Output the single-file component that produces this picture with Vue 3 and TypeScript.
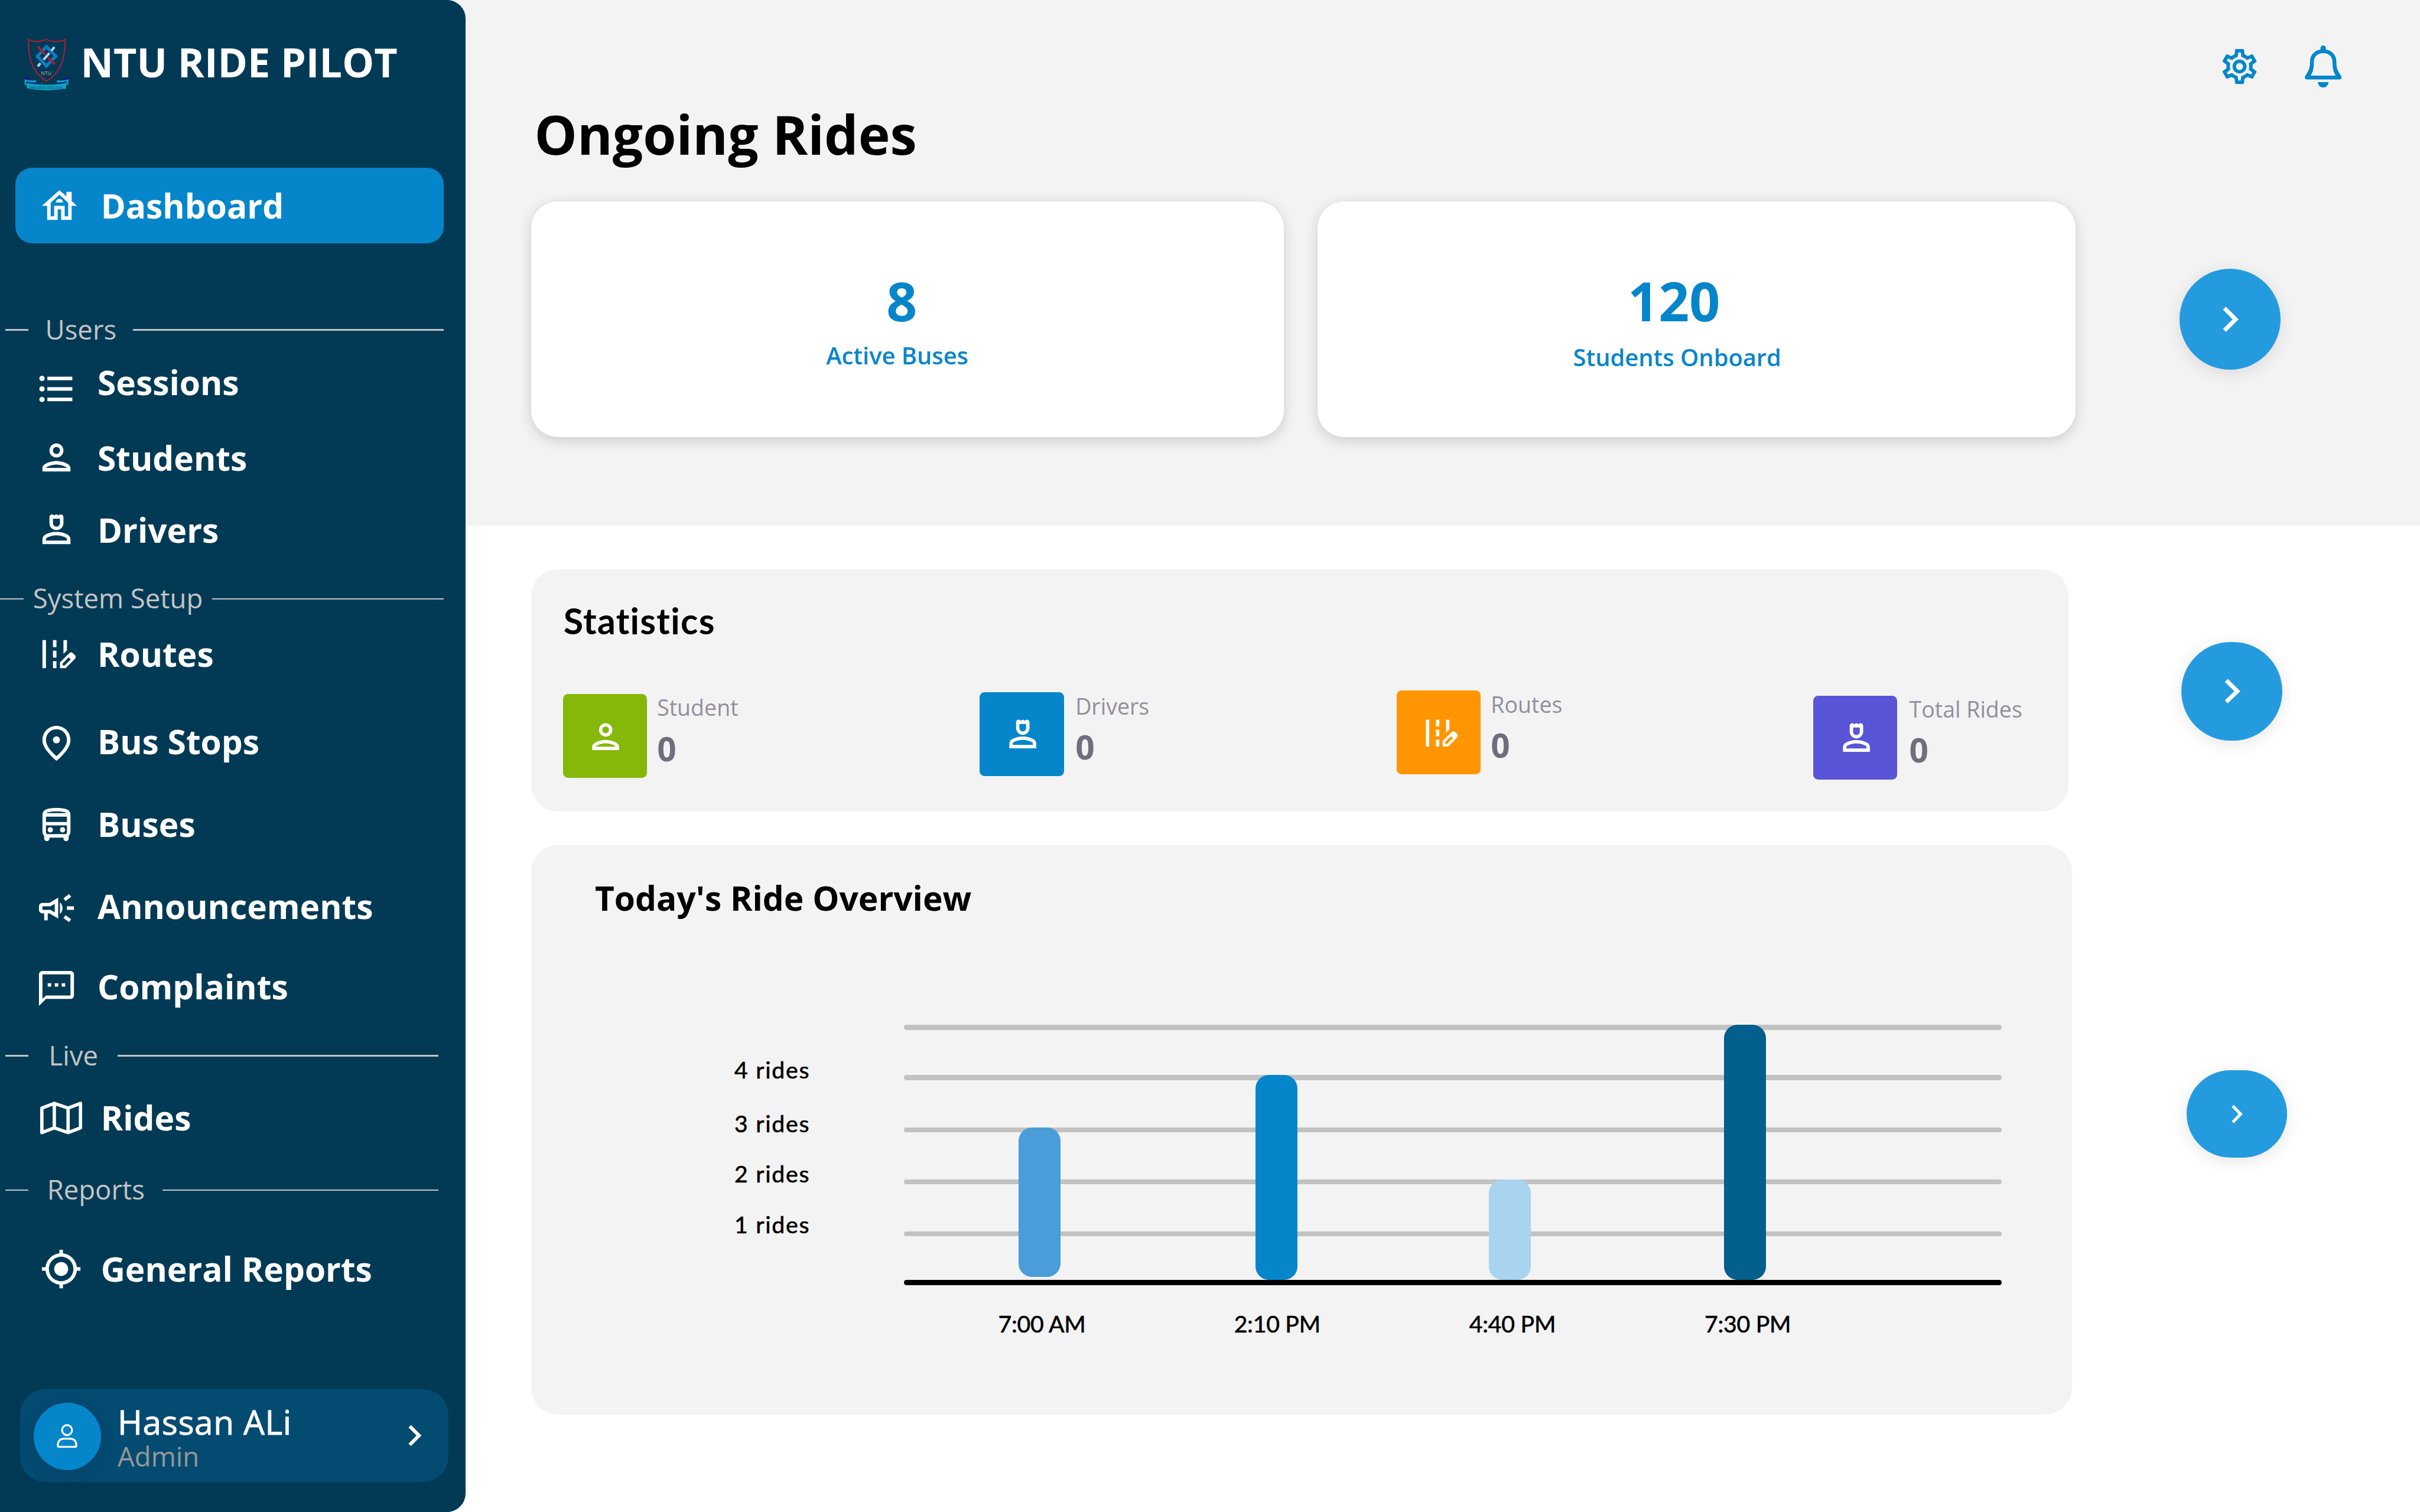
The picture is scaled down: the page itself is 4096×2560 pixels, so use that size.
<script setup lang="ts">
type IconName =
  | 'home' | 'list' | 'person' | 'driver' | 'road' | 'pin' | 'bus' | 'campaign'
  | 'message' | 'target' | 'chevron' | 'gear'

interface NavItem { key: string; label: string; icon: IconName | 'map' }
interface NavSection { key: string; title: string; items: NavItem[] }
interface Stat { key: string; label: string; value: number; icon: IconName }
interface RideBar { key: string; time: string; height: number }

const icons: Record<IconName, string> = {
  home: 'M19 9.3V4h-3v2.6L12 3 2 12h3v8h6v-6h2v6h6v-8h3l-3-2.7zM17 18h-2v-6H9v6H7v-7.81l5-4.5 5 4.5V18zM10 10h4c0-1.1-.9-2-2-2s-2 .9-2 2z',
  list: 'M4 10.5c-.83 0-1.5.67-1.5 1.5s.67 1.5 1.5 1.5 1.5-.67 1.5-1.5-.67-1.5-1.5-1.5zm0-6c-.83 0-1.5.67-1.5 1.5S3.17 7.5 4 7.5 5.5 6.83 5.5 6 4.83 4.5 4 4.5zm0 12c-.83 0-1.5.68-1.5 1.5s.68 1.5 1.5 1.5 1.5-.68 1.5-1.5-.67-1.5-1.5-1.5zM7 19h14v-2H7v2zm0-6h14v-2H7v2zm0-8v2h14V5H7z',
  person: 'M12 6c1.1 0 2 .9 2 2s-.9 2-2 2-2-.9-2-2 .9-2 2-2m0 10c2.7 0 5.8 1.29 6 2H6c.23-.72 3.31-2 6-2m0-12C9.79 4 8 5.79 8 8s1.79 4 4 4 4-1.79 4-4-1.79-4-4-4zm0 10c-2.67 0-8 1.34-8 4v2h16v-2c0-2.66-5.33-4-8-4z',
  driver: 'M18.39 14.56C16.71 13.7 14.53 13 12 13s-4.71.7-6.39 1.56C4.61 15.07 4 16.1 4 17.22V20h16v-2.78c0-1.12-.61-2.15-1.61-2.66zM18 18H6v-.78c0-.38.2-.72.52-.88C7.71 15.73 9.63 15 12 15c2.37 0 4.29.73 5.48 1.34.32.16.52.5.52.88V18zM12 12c2.21 0 4-1.79 4-4V4.5c0-.83-.67-1.5-1.5-1.5-.52 0-.98.27-1.25.67-.27-.4-.73-.67-1.25-.67s-.98.27-1.25.67c-.27-.4-.73-.67-1.25-.67C8.67 3 8 3.67 8 4.5V8c0 2.21 1.79 4 4 4zM10 5.5h4V8c0 1.1-.9 2-2 2s-2-.9-2-2V5.5z',
  road: 'M18 4h-2v7.9l2-2V4zM4 4h2v16H4V4zM10 4h2v4h-2V4zM10 10h2v4h-2v-4zM10 16h2v4h-2v-4zM22.56 12.59l-1.15-1.15c-.59-.59-1.54-.59-2.12 0L14 16.73V20h3.27l5.29-5.29c.59-.59.59-1.54 0-2.12zM16.65 18.5H15.5v-1.15l3.5-3.5 1.15 1.15-3.5 3.5z',
  pin: 'M12 2C7.8 2 4 5.22 4 10.2c0 3.32 2.67 7.25 8 11.8 5.33-4.55 8-8.48 8-11.8C20 5.22 16.2 2 12 2zm0 17.34c-3.9-3.35-6-6.57-6-9.14C6 6.57 8.65 4 12 4s6 2.57 6 6.2c0 2.57-2.1 5.79-6 9.14zM12 8c-1.1 0-2 .9-2 2s.9 2 2 2 2-.9 2-2-.9-2-2-2z',
  bus: 'M12 2C8 2 4 2.5 4 6v9.5c0 .95.38 1.81 1 2.44v1.56c0 .83.67 1.5 1.5 1.5S8 20.33 8 19.5V19h8v.5c0 .82.67 1.5 1.5 1.5.82 0 1.5-.67 1.5-1.5v-1.56c.62-.63 1-1.49 1-2.44V6c0-3.5-3.58-4-8-4zm5.66 2.99H6.34C6.89 4.46 8.31 4 12 4s5.11.46 5.66.99zM18 6.99V10H6V6.99h12zm-.34 9.74-.29.27H6.63l-.29-.27C6.21 16.62 6 16.17 6 15.5V12h12v3.5c0 .67-.21 1.12-.34 1.23zM8.5 13C7.67 13 7 13.67 7 14.5S7.67 16 8.5 16s1.5-.67 1.5-1.5S9.33 13 8.5 13zM15.5 13c-.83 0-1.5.67-1.5 1.5s.67 1.5 1.5 1.5 1.5-.67 1.5-1.5-.67-1.5-1.5-1.5z',
  campaign: 'M18 11v2h4v-2h-4zM16 17.61c.96.71 2.21 1.65 3.2 2.39.4-.53.8-1.07 1.2-1.6-.99-.74-2.24-1.68-3.2-2.4-.4.54-.8 1.08-1.2 1.61zM20.4 5.6C20 5.07 19.6 4.53 19.2 4c-.99.74-2.24 1.68-3.2 2.4.4.53.8 1.07 1.2 1.6.96-.72 2.21-1.65 3.2-2.4zM4 9c-1.1 0-2 .9-2 2v2c0 1.1.9 2 2 2h1v4h2v-4h1l5 3V6L8 9H4zm5.03 1.71L11 9.53v4.94l-1.97-1.18-.48-.29H4v-2h4.55l.48-.29zM15.5 12c0-1.33-.58-2.53-1.5-3.35v6.69c.92-.81 1.5-2.01 1.5-3.34z',
  message: 'M20 2H4c-1.1 0-2 .9-2 2v18l4-4h14c1.1 0 2-.9 2-2V4c0-1.1-.9-2-2-2zm0 14H6l-2 2V4h16v12zM7 9h2v2H7V9zM11 9h2v2h-2V9zM15 9h2v2h-2V9z',
  target: 'M12 8c-2.21 0-4 1.79-4 4s1.79 4 4 4 4-1.79 4-4-1.79-4-4-4zm8.94 3c-.46-4.17-3.77-7.48-7.94-7.94V1h-2v2.06C6.83 3.52 3.52 6.83 3.06 11H1v2h2.06c.46 4.17 3.77 7.48 7.94 7.94V23h2v-2.06c4.17-.46 7.48-3.77 7.94-7.94H23v-2h-2.06zM12 19c-3.87 0-7-3.13-7-7s3.13-7 7-7 7 3.13 7 7-3.13 7-7 7z',
  chevron: 'M10 6 8.59 7.41 13.17 12l-4.58 4.59L10 18l6-6z',
  gear: 'M19.43 12.98c.04-.32.07-.64.07-.98 0-.34-.03-.66-.07-.98l2.11-1.65c.19-.15.24-.42.12-.64l-2-3.46c-.09-.16-.26-.25-.44-.25-.06 0-.12.01-.17.03l-2.49 1c-.52-.4-1.08-.73-1.69-.98l-.38-2.65C14.46 2.18 14.25 2 14 2h-4c-.25 0-.46.18-.49.42l-.38 2.65c-.61.25-1.17.59-1.69.98l-2.49-1c-.06-.02-.12-.03-.18-.03-.17 0-.34.09-.43.25l-2 3.46c-.13.22-.07.49.12.64l2.11 1.65c-.04.32-.07.65-.07.98 0 .33.03.66.07.98l-2.11 1.65c-.19.15-.24.42-.12.64l2 3.46c.09.16.26.25.44.25.06 0 .12-.01.17-.03l2.49-1c.52.4 1.08.73 1.69.98l.38 2.65c.03.24.24.42.49.42h4c.25 0 .46-.18.49-.42l.38-2.65c.61-.25 1.17-.59 1.69-.98l2.49 1c.06.02.12.03.18.03.17 0 .34-.09.43-.25l2-3.46c.12-.22.07-.49-.12-.64l-2.11-1.65zm-1.98-1.71c.04.31.05.52.05.73 0 .21-.02.43-.05.73l-.14 1.13.89.7 1.08.84-.7 1.21-1.27-.51-1.04-.42-.9.68c-.43.32-.84.56-1.25.73l-1.06.43-.16 1.13-.2 1.35h-1.4l-.19-1.35-.16-1.13-1.06-.43c-.43-.18-.83-.41-1.23-.71l-.91-.7-1.06.43-1.27.51-.7-1.21 1.08-.84.89-.7-.14-1.13c-.03-.31-.05-.54-.05-.74s.02-.43.05-.73l.14-1.13-.89-.7-1.08-.84.7-1.21 1.27.51 1.04.42.9-.68c.43-.32.84-.56 1.25-.73l1.06-.43.16-1.13.2-1.35h1.39l.19 1.35.16 1.13 1.06.43c.43.18.83.41 1.23.71l.91.7 1.06-.43 1.27-.51.7 1.21-1.07.85-.89.7.14 1.13zM12 8c-2.21 0-4 1.79-4 4s1.79 4 4 4 4-1.79 4-4-1.79-4-4-4zm0 6c-1.1 0-2-.9-2-2s.9-2 2-2 2 .9 2 2-.9 2-2 2z',
}

const sections: NavSection[] = [
  {
    key: 'users',
    title: 'Users',
    items: [
      { key: 'sessions', label: 'Sessions', icon: 'list' },
      { key: 'students', label: 'Students', icon: 'person' },
      { key: 'drivers', label: 'Drivers', icon: 'driver' },
    ],
  },
  {
    key: 'setup',
    title: 'System Setup',
    items: [
      { key: 'routes', label: 'Routes', icon: 'road' },
      { key: 'stops', label: 'Bus Stops', icon: 'pin' },
      { key: 'buses', label: 'Buses', icon: 'bus' },
      { key: 'announcements', label: 'Announcements', icon: 'campaign' },
      { key: 'complaints', label: 'Complaints', icon: 'message' },
    ],
  },
  { key: 'live', title: 'Live', items: [{ key: 'rides', label: 'Rides', icon: 'map' }] },
  { key: 'reports', title: 'Reports', items: [{ key: 'general', label: 'General Reports', icon: 'target' }] },
]

const stats: Stat[] = [
  { key: 'student', label: 'Student', value: 0, icon: 'person' },
  { key: 'driver', label: 'Drivers', value: 0, icon: 'driver' },
  { key: 'route', label: 'Routes', value: 0, icon: 'road' },
  { key: 'total', label: 'Total Rides', value: 0, icon: 'driver' },
]

const bars: RideBar[] = [
  { key: 'b1', time: '7:00 AM', height: 89 },
  { key: 'b2', time: '2:10 PM', height: 122 },
  { key: 'b3', time: '4:40 PM', height: 60 },
  { key: 'b4', time: '7:30 PM', height: 152 },
]

const levels: number[] = [4, 3, 2, 1]
const barHeight = (bar: RideBar): string => `${bar.height / 10}rem`
</script>

<template>
  <div class="shell">
    <aside class="sidebar">
      <div class="brand">
        <svg class="crest" viewBox="48 33 324 372">
          <path d="M83 41C105 58 160 62 212 40C262 62 320 58 343 41C345 150 330 265 211 338C95 265 80 150 83 41Z" fill="none" stroke="#a81c3a" stroke-width="9" />
          <path d="M211 92L277 160L211 230L146 162Z" fill="none" stroke="#0d7dc2" stroke-width="22" />
          <path d="M268 95L246 122M232 138L190 186M168 210L149 233" fill="none" stroke="#b5d1f1" stroke-width="17" />
          <path d="M149 90L203 148M224 170L270 218" fill="none" stroke="#a81c3a" stroke-width="17" />
          <text x="173" y="296" font-size="42" textLength="72" lengthAdjust="spacingAndGlyphs" fill="#b3aa8c">NTU</text>
          <path d="M52 311L90 313V330L52 326ZM370 311L332 313V330L370 326Z" fill="#1b1a86" />
          <path d="M55 325C80 334 110 335 137 333V349C105 352 80 350 66 346L68 368L55 362ZM368 325C342 334 312 335 286 333V349C318 352 342 350 356 346L354 368L367 362Z" fill="#0ea2c6" />
          <path d="M68 340C90 347 110 349 132 347V359L68 353ZM354 340C332 347 312 349 290 347V359L354 353Z" fill="#1b1a86" />
          <path d="M68 352C160 368 262 368 354 352L351 392C262 408 160 408 72 390Z" fill="#0ea2c6" />
          <text x="90" y="394" font-size="29" textLength="240" lengthAdjust="spacingAndGlyphs" fill="#0a4c68">INNOVATE AND LEAD</text>
        </svg>
        <span class="brand-name">NTU RIDE PILOT</span>
      </div>

      <a class="dashboard">
        <svg class="icon" viewBox="0 0 24 24"><path :d="icons.home" fill-rule="evenodd" /></svg>
        <span>Dashboard</span>
      </a>

      <template v-for="section in sections" :key="section.key">
        <div class="divider" :class="section.key">
          <i class="rule short"></i>
          <span>{{ section.title }}</span>
          <i class="rule"></i>
        </div>
        <a v-for="item in section.items" :key="item.key" class="nav-item" :class="item.key">
          <svg v-if="item.icon === 'map'" class="icon map" viewBox="0 0 25 21">
            <path d="M1 4.6L8.4 1.8L16.6 4.6L24 1.8V16.4L16.6 19.2L8.4 16.4L1 19.2ZM8.4 1.8V16.4M16.6 4.6V19.2" />
          </svg>
          <svg v-else class="icon" viewBox="0 0 24 24" preserveAspectRatio="none">
            <path :d="icons[item.icon]" fill-rule="evenodd" />
          </svg>
          <span>{{ item.label }}</span>
        </a>
      </template>

      <div class="profile">
        <div class="avatar">
          <svg class="user" viewBox="0 0 13 15">
            <circle cx="6.5" cy="4" r="2.95" />
            <path d="M1 13.2C1 10.6 2.3 9.1 4.6 9.1H8.4C10.7 9.1 12 10.6 12 13.2C12 13.6 11.9 13.9 11.5 13.9H1.5C1.1 13.9 1 13.6 1 13.2Z" />
          </svg>
        </div>
        <div class="who">
          <span class="name">Hassan ALi</span>
          <span class="role">Admin</span>
        </div>
        <svg class="icon more" viewBox="0 0 24 24"><path :d="icons.chevron" /></svg>
      </div>
    </aside>

    <main class="content">
      <header class="hero">
        <div class="toolbar">
          <svg class="gear" viewBox="0 0 24 24"><path :d="icons.gear" fill-rule="evenodd" /></svg>
          <svg class="bell" viewBox="0 0 21.9 25">
            <path fill-rule="evenodd" d="M9.35 1.6C9.35.7 10 0 10.95 0S12.55.7 12.55 1.6V2.4C16.3 3.1 18.8 5.9 18.8 9.5V10.6C18.9 13.4 19.6 15.2 21.5 17.8C22.3 19 21.8 20.2 20.6 20.2H1.3C.1 20.2-.4 19 .4 17.8C2.3 15.2 3 13.4 3.1 10.6V9.5C3.1 5.9 5.6 3.1 9.35 2.4ZM10.95 4.6C7.6 4.6 5.4 6.7 5.4 9.8C5.4 13.2 5 15.6 3.5 17.9H18.4C16.9 15.6 16.5 13.2 16.5 9.8C16.5 6.7 14.3 4.6 10.95 4.6Z" />
            <path d="M7.8 21.8H14.1C14 23.7 12.8 25 10.95 25S7.9 23.7 7.8 21.8Z" />
          </svg>
        </div>
        <h1>Ongoing Rides</h1>
        <div class="row">
          <section class="metric buses">
            <strong>8</strong>
            <span>Active Buses</span>
          </section>
          <section class="metric onboard">
            <strong>120</strong>
            <span>Students Onboard</span>
          </section>
          <button class="go first"><svg viewBox="0 0 24 24" preserveAspectRatio="none"><path :d="icons.chevron" /></svg></button>
        </div>
      </header>

      <div class="row stats-row">
        <section class="panel stats">
          <h2>Statistics</h2>
          <div class="stat-grid">
            <div v-for="stat in stats" :key="stat.key" class="stat" :class="stat.key">
              <div class="tile">
                <svg viewBox="0 0 24 24"><path :d="icons[stat.icon]" fill-rule="evenodd" /></svg>
              </div>
              <div class="figures">
                <span class="label">{{ stat.label }}</span>
                <span class="value">{{ stat.value }}</span>
              </div>
            </div>
          </div>
        </section>
        <button class="go second"><svg viewBox="0 0 24 24" preserveAspectRatio="none"><path :d="icons.chevron" /></svg></button>
      </div>

      <div class="row overview-row">
        <section class="panel overview">
          <h3>Today's Ride Overview</h3>
          <div class="chart">
            <div class="levels">
              <span v-for="level in levels" :key="level">{{ level }} rides</span>
            </div>
            <div class="plot-area">
              <div class="plot">
                <div class="lines">
                  <i></i><i></i><i></i><i></i><i></i><i class="axis"></i>
                </div>
                <div class="bars">
                  <div v-for="bar in bars" :key="bar.key" class="bar" :class="bar.key" :style="{ height: barHeight(bar) }"></div>
                </div>
              </div>
              <div class="times">
                <span v-for="bar in bars" :key="bar.key">{{ bar.time }}</span>
              </div>
            </div>
          </div>
        </section>
        <button class="go third"><svg viewBox="0 0 24 24" preserveAspectRatio="none"><path :d="icons.chevron" /></svg></button>
      </div>
    </main>
  </div>
</template>

<style>
/* 1rem is 10 units of the 1440-unit wide layout */
html {
  font-size: calc(100vw / 144);
}
body {
  margin: 0;
}
</style>

<style scoped>
.shell {
  display: flex;
  width: 144rem;
  height: 90rem;
  overflow: hidden;
  background: linear-gradient(#f3f3f3 31.3rem, #fff 31.3rem);
  font-family: "Open Sans", "Noto Sans", sans-serif;
  color: #000;
}
.shell *,
.shell *::before {
  box-sizing: border-box;
}
svg {
  display: block;
  flex: none;
  fill: currentColor;
}
h1, h2, h3 {
  margin: 0;
}
span {
  white-space: nowrap;
}

/* Sidebar */
.sidebar {
  display: flex;
  flex-direction: column;
  flex: none;
  width: 27.7rem;
  height: 90rem;
  padding-top: 1.97rem;
  background: #023a55;
  border-radius: 0 1.1rem 1.1rem 0;
  color: #fff;
}
.brand {
  display: flex;
  align-items: flex-start;
  height: 3.4rem;
  padding-left: 1.4rem;
}
.crest {
  width: 2.7rem;
  height: 3.1rem;
  margin-top: 0.3rem;
  overflow: visible;
  font-family: "Liberation Sans", sans-serif;
}
.brand-name {
  margin-left: 0.7rem;
  padding-top: 0.03rem;
  font-size: 2.4rem;
  line-height: 3.4rem;
  font-weight: 700;
}
.dashboard span,
.nav-item span {
  padding-top: 0.03rem;
}
.divider span {
  padding-top: 0.02rem;
}
.icon {
  width: 2.5rem;
  height: 2.5rem;
}
.dashboard {
  display: flex;
  align-items: flex-start;
  width: 25.5rem;
  height: 4.5rem;
  margin: 4.63rem 0 0 0.9rem;
  padding: 0.83rem 0 0 1.4rem;
  border-radius: 1rem;
  background: #0586cb;
  font-size: 2rem;
  line-height: 2.8rem;
  font-weight: 700;
}
.dashboard .icon {
  margin: 0.17rem 1.2rem 0 0;
}
.divider {
  display: flex;
  align-items: flex-start;
  width: 26.4rem;
  height: 2.2rem;
  padding-left: 0.3rem;
  font-size: 1.6rem;
  line-height: 2.2rem;
  color: #c4c4c4;
}
.rule {
  flex: 1;
  height: 0.1rem;
  margin-top: 1.13rem;
  background: #c4c4c4;
}
.rule.short {
  flex: none;
  width: 1.4rem;
}
.divider.users { margin-top: 3.97rem; }
.divider.users span { margin: 0 0.98rem 0 0.99rem; }
.divider.setup { margin-top: 1.54rem; padding-left: 0; }
.divider.setup span { margin: 0 0.55rem 0 0.56rem; }
.divider.live { margin-top: 1.54rem; width: 26.1rem; }
.divider.live span { margin: 0 1.15rem 0 1.2rem; }
.divider.reports { margin-top: 1.74rem; width: 26.1rem; }
.divider.reports span { margin: 0 1.07rem 0 1.1rem; }

.nav-item {
  display: flex;
  align-items: flex-start;
  height: 2.8rem;
  padding-left: 2.1rem;
  font-size: 2rem;
  line-height: 2.8rem;
  font-weight: 700;
}
.nav-item .icon {
  margin: 0.17rem 1.2rem 0 0;
}
.nav-item.sessions { margin-top: 0.66rem; padding-left: 2.08rem; }
.nav-item.sessions .icon { width: 2.55rem; margin: 0.57rem 1.17rem 0 0; }
.nav-item.students { margin-top: 1.7rem; }
.nav-item.drivers { margin-top: 1.5rem; }
.nav-item.routes { margin-top: 0.86rem; }
.nav-item.stops { margin-top: 2.4rem; }
.nav-item.buses { margin-top: 2.1rem; }
.nav-item.announcements { margin-top: 2.1rem; }
.nav-item.complaints { margin-top: 2rem; }
.nav-item.stops .icon,
.nav-item.buses .icon,
.nav-item.announcements .icon,
.nav-item.complaints .icon { margin-top: 0.27rem; }
.nav-item.rides { margin-top: 1.26rem; padding-left: 2.4rem; }
.nav-item.rides .icon { height: 2.1rem; margin: 0.37rem 1.1rem 0 0; }
.map {
  fill: none;
  stroke: currentColor;
  stroke-width: 2;
  stroke-linejoin: round;
}
.nav-item.general { margin-top: 2.26rem; padding-left: 2.4rem; }
.nav-item.general .icon { margin-right: 1.1rem; }

.profile {
  display: flex;
  align-items: flex-start;
  width: 25.5rem;
  height: 5.5rem;
  margin: 5.77rem 0 0 1.2rem;
  padding: 0 0.8rem;
  border-radius: 1.5rem;
  background: #044b72;
}
.avatar {
  display: flex;
  justify-content: center;
  width: 4rem;
  height: 4rem;
  margin-top: 0.8rem;
  padding-top: 1.25rem;
  border-radius: 50%;
  background: #0586cb;
  box-shadow: 0 0.2rem 1rem rgba(0, 0, 0, 0.1);
}
.user {
  width: 1.3rem;
  height: 1.5rem;
  fill: none;
  stroke: #fff;
  stroke-width: 1.15;
}
.who {
  display: flex;
  flex-direction: column;
  flex: 1;
  margin-left: 1rem;
  padding-top: 0.56rem;
}
.name {
  font-size: 2rem;
  line-height: 2.8rem;
  letter-spacing: 0.02rem;
  -webkit-text-stroke: 0.03rem currentColor;
}
.role {
  margin-top: -0.48rem;
  font-size: 1.6rem;
  line-height: 2.2rem;
  color: #979797;
}
.icon.more {
  margin: 1.5rem 0 0;
}

/* Content */
.content {
  flex: 1;
  padding-left: 3.9rem;
}
.row {
  display: flex;
  align-items: flex-start;
}
.hero {
  height: 31.3rem;
}
.toolbar {
  display: flex;
  justify-content: flex-end;
  gap: 2.66rem;
  padding: 2.7rem 4.65rem 0 0;
  color: #0586cb;
}
.gear {
  width: 2.5rem;
  height: 2.5rem;
}
.bell {
  width: 2.19rem;
  height: 2.5rem;
}
h1 {
  margin: 0.61rem 0 1.79rem 0.2rem;
  font-size: 3.2rem;
  line-height: 4.4rem;
  font-weight: 700;
}
.metric {
  display: flex;
  flex-direction: column;
  align-items: center;
  flex: none;
  height: 14rem;
  padding-top: 3.7rem;
  border-radius: 1.6rem;
  background: #fff;
  box-shadow: 0 0.2rem 0.8rem rgba(0, 0, 0, 0.16);
  color: #0586cb;
}
.metric strong {
  font-size: 3.2rem;
  line-height: 4.4rem;
  font-weight: 700;
}
.metric span {
  font-size: 1.4rem;
  line-height: 2rem;
  font-weight: 600;
}
.buses.metric {
  width: 44.8rem;
  margin-right: 2rem;
  padding-right: 1.22rem;
}
.buses strong {
  padding-left: 0.54rem;
}
.buses.metric span {
  margin-top: 0.09rem;
}
.onboard {
  width: 45.1rem;
  padding-right: 2.3rem;
}
.onboard strong {
  padding-right: 0.38rem;
}
.onboard span {
  margin-top: 0.19rem;
}
.go {
  display: flex;
  align-items: center;
  justify-content: center;
  flex: none;
  width: 6rem;
  padding: 0;
  border: 0;
  border-radius: 3rem;
  background: #259bdf;
  box-shadow: 0 0.2rem 1rem rgba(0, 0, 0, 0.1);
  color: #fff;
}
.go svg {
  width: 3rem;
  height: 3rem;
}
.go.first {
  height: 6rem;
  margin: 4rem 0 0 6.2rem;
}
.go.second {
  height: 5.9rem;
  margin: 4.3rem 0 0 6.7rem;
}
.go.second svg {
  height: 2.9rem;
}
.go.third {
  height: 5.2rem;
  margin: 13.4rem 0 0 6.8rem;
  border-radius: 2.6rem;
}
.go.third svg {
  width: 2.1rem;
  height: 2.2rem;
}
.panel {
  flex: none;
  border-radius: 1.6rem;
  background: #f3f3f3;
}

/* Statistics */
.stats-row {
  margin-top: 2.6rem;
}
.stats {
  width: 91.5rem;
  height: 14.4rem;
  padding: 1.63rem 0 0 1.9rem;
}
h2 {
  padding-left: 0.03rem;
  font-family: Lato, sans-serif;
  font-size: 2.14rem;
  line-height: 2.8rem;
  font-weight: 700;
  letter-spacing: 0.045rem;
}
.stat-grid {
  display: grid;
  grid-template-columns: repeat(4, 24.8rem);
  align-items: start;
  width: 91.5rem;
  margin-top: 2.77rem;
}
.stat {
  display: flex;
  align-items: flex-start;
}
.tile {
  flex: none;
  width: 5rem;
  height: 5rem;
  padding: 1.35rem 0 0 1.35rem;
  border-radius: 0.3rem;
  color: #fff;
}
.tile svg {
  width: 2.4rem;
  height: 2.4rem;
}
.figures {
  display: flex;
  flex-direction: column;
  margin: -0.08rem 0 0 0.6rem;
}
.label {
  font-size: 1.32rem;
  line-height: 1.8rem;
  color: #938e9b;
}
.value {
  margin-top: 0.14rem;
  font-size: 2rem;
  line-height: 2.8rem;
  font-weight: 700;
  color: #736c7c;
}
.stat.student { margin-top: 0.2rem; }
.stat.student .tile { background: #85b809; }
.stat.driver { margin-top: 0.1rem; }
.stat.driver .tile { background: #0586cb; }
.stat.driver .figures { margin-left: 0.69rem; }
.stat.route .tile { background: #ff9500; padding-left: 1.36rem; }
.stat.route .figures { margin-left: 0.61rem; }
.stat.total { margin-top: 0.3rem; }
.stat.total .tile { background: #5856d6; }
.stat.total .figures { margin-left: 0.71rem; }

/* Overview chart */
.overview-row {
  margin-top: 2rem;
}
.overview {
  width: 91.7rem;
  height: 33.9rem;
  padding-top: 1.76rem;
}
h3 {
  padding-left: 3.8rem;
  font-size: 2rem;
  line-height: 2.8rem;
  font-weight: 700;
}
.chart {
  display: flex;
  align-items: flex-start;
  margin: 6.14rem 0 0 12.1rem;
  font-family: Lato, sans-serif;
  font-size: 1.38rem;
  line-height: 2rem;
  -webkit-text-stroke: 0.022rem currentColor;
}
.levels {
  display: flex;
  flex-direction: column;
  gap: 1rem;
  width: 10.1rem;
  padding-top: 1.68rem;
  letter-spacing: 0.06rem;
}
.levels span:first-child {
  margin-bottom: 0.2rem;
}
.plot {
  display: grid;
  width: 65.3rem;
  height: 15.5rem;
}
.lines,
.bars {
  grid-area: 1 / 1;
}
.lines {
  display: flex;
  flex-direction: column;
  gap: 2.8rem;
}
.lines i {
  height: 0.3rem;
  border-radius: 0.15rem;
  background: #c2c2c2;
}
.lines i:first-child {
  margin-bottom: -0.1rem;
}
.lines .axis {
  margin-top: -0.2rem;
  background: #000;
}
.bars {
  display: flex;
  align-items: flex-end;
  height: 15.2rem;
  padding-left: 6.8rem;
}
.bar {
  width: 2.5rem;
  border-radius: 0.8rem;
}
.bar.b1 { margin-bottom: 0.2rem; background: #4a9dd8; }
.bar.b2 { margin-left: 11.6rem; background: #0586cb; }
.bar.b3 { margin-left: 11.4rem; background: #a8d4f0; }
.bar.b4 { margin-left: 11.5rem; background: #035f8b; }
.times {
  display: grid;
  grid-template-columns: repeat(4, 14rem);
  justify-items: center;
  margin: 1.29rem 0 0 1.2rem;
  letter-spacing: -0.01rem;
}
</style>
